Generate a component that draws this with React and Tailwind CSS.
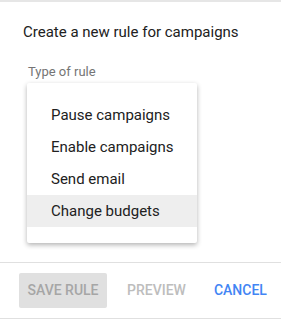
import React from "react";

const ITEMS = ["Pause campaigns", "Enable campaigns", "Send email", "Change budgets"];

export default function App() {
  return (
    <div className="w-[281px] h-[320px] bg-white border-t-2 border-[#e6e6e6] font-['Roboto',sans-serif] flex flex-col">
      {/* Body */}
      <div className="relative h-[261px] border-b border-[#e0e0e0]">
        <div className="pl-[23px] pt-[20px] text-[15px] leading-[20px] text-[#212121]">
          Create a new rule for campaigns
        </div>
        <div className="pl-[28px] pt-[22px] text-[13px] leading-[16px] text-[#757575]">
          Type of rule
        </div>

        {/* Dropdown menu */}
        <div className="absolute left-[27px] top-[81px] w-[170px] bg-white py-[16px] rounded-[2px] shadow-[0_2px_5px_rgba(0,0,0,0.3)]">
          {ITEMS.map((item, i) => (
            <div
              key={item}
              className={`h-[32px] flex items-center pl-[24px] text-[15px] text-[#212121] ${
                i === 3 ? "bg-[#eeeeee]" : ""
              }`}
            >
              {item}
            </div>
          ))}
        </div>
      </div>

      {/* Footer */}
      <div className="flex items-center h-[56px] pl-[19px] border-b border-[#e0e0e0]">
        <button className="w-[88px] h-[35px] rounded-[2px] bg-[#e0e0e0] text-[14px] font-medium text-[#a6a6a6]">
          SAVE RULE
        </button>
        <button className="ml-[20px] text-[14px] font-medium text-[#bdbdbd]">PREVIEW</button>
        <button className="ml-[28px] text-[14px] font-medium text-[#4285f4]">CANCEL</button>
      </div>
    </div>
  );
}
